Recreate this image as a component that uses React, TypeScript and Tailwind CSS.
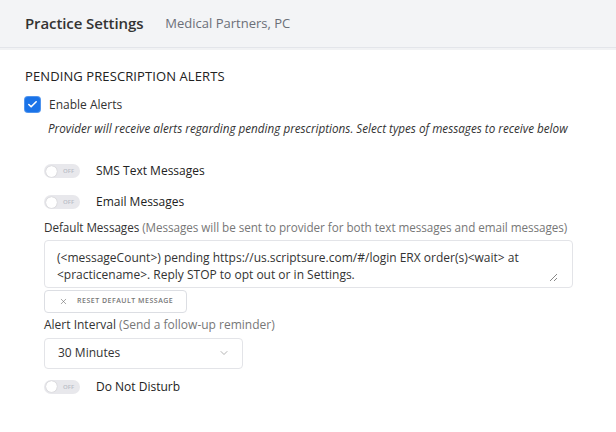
import { Check, ChevronDown, X } from "lucide-react";

function Toggle() {
  return (
    <div className="flex h-[14px] w-[36px] shrink-0 items-center rounded-full bg-[#e8e8ec] pl-[2px]">
      <span className="h-[11px] w-[11px] rounded-full bg-white shadow-[0_0_1px_rgba(0,0,0,0.3)]" />
      <span className="ml-[6px] text-[6px] font-semibold leading-none text-[#b8bcc6]">OFF</span>
    </div>
  );
}

function ToggleRow({ label }: { label: string }) {
  return (
    <div className="flex items-center gap-[16px]">
      <Toggle />
      <span className="text-[12px] text-[#222]">{label}</span>
    </div>
  );
}

export default function App() {
  return (
    <div
      className="h-[432px] w-[616px] overflow-hidden bg-white text-[#222]"
      style={{ fontFamily: '"Open Sans", "Noto Sans", sans-serif' }}
    >
      <header className="flex h-[48px] items-center gap-[22px] border-b border-[#e3e5ea] bg-[#f3f4f6] px-[25px]">
        <h1 className="text-[15px] font-semibold tracking-[-0.1px] text-[#333]">Practice Settings</h1>
        <span className="text-[13px] text-[#6b6f78]">Medical Partners, PC</span>
      </header>
      <div className="h-[2px] bg-[#f1f2f4]" />

      <main className="px-[25px] pt-[17px]">
        <h2 className="text-[13px] tracking-[0.1px] text-[#222]">PENDING PRESCRIPTION ALERTS</h2>

        <label className="mt-[9px] flex items-center gap-[9px]">
          <span className="flex h-[15px] w-[15px] items-center justify-center rounded-[3px] bg-[#1a73e8] shadow-[0_0_0_1px_#4f94ee]">
            <Check size={11} strokeWidth={3.5} className="text-white" />
          </span>
          <span className="text-[12px] text-[#333]">Enable Alerts</span>
        </label>

        <p className="mt-[6px] pl-[23px] text-[11.7px] italic text-[#333]">
          Provider will receive alerts regarding pending prescriptions. Select types of messages to receive below
        </p>

        <div className="flex flex-col gap-[13px] pl-[19px] pt-[25px]">
          <ToggleRow label="SMS Text Messages" />
          <ToggleRow label="Email Messages" />
        </div>

        <div className="pl-[19px] pt-[8px]">
          <div className="text-[11.7px] tracking-[-0.05px] text-[#333]">
            Default Messages{" "}
            <span className="text-[#777]">
              (Messages will be sent to provider for both text messages and email messages)
            </span>
          </div>

          <div className="relative mt-[3px] h-[48px] w-[529px] rounded-[4px] border border-[#e3e4e8] px-[12px] pt-[8px] text-[12px] leading-[17px] text-[#333]">
            (&lt;messageCount&gt;) pending https://us.scriptsure.com/#/login ERX order(s)&lt;wait&gt; at
            <br />
            &lt;practicename&gt;. Reply STOP to opt out or in Settings.
            <svg className="absolute bottom-[5px] right-[14px]" width="10" height="10" viewBox="0 0 10 10">
              <path d="M9 2 L2 9 M9 6 L6 9" stroke="#888" strokeWidth="1" fill="none" />
            </svg>
          </div>

          <button className="mt-[2px] flex h-[23px] w-[143px] items-center gap-[9px] rounded-[4px] border border-[#dcdee3] bg-white pl-[14px] text-[7px] font-semibold tracking-[0.5px] text-[#777]">
            <X size={9} strokeWidth={1.5} className="text-[#666]" />
            RESET DEFAULT MESSAGE
          </button>

          <div className="mt-[3px] text-[12px] text-[#333]">
            Alert Interval <span className="text-[#777]">(Send a follow-up reminder)</span>
          </div>

          <div className="mt-[4px] flex h-[31px] w-[199px] items-center justify-between rounded-[4px] border border-[#e3e4e8] pl-[13px] pr-[12px] text-[12px] text-[#333]">
            <span>30 Minutes</span>
            <ChevronDown size={12} strokeWidth={1.5} className="text-[#999]" />
          </div>

          <div className="mt-[9px]">
            <ToggleRow label="Do Not Disturb" />
          </div>
        </div>
      </main>
    </div>
  );
}
